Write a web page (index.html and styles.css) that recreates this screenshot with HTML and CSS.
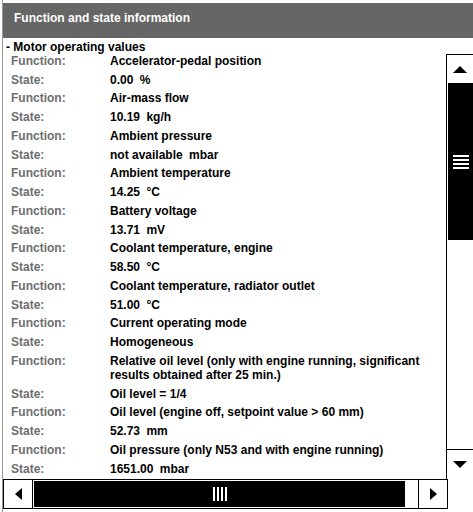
FILE: index.html
```html
<!DOCTYPE html>
<html lang="en">
<head>
<meta charset="UTF-8" />
<meta name="viewport" content="width=device-width, initial-scale=1" />
<title>Function and state information</title>
<link rel="stylesheet" href="styles.css">
</head>
<body>

<div class="frame">
  <div class="frame-title">Function and state information</div>

  <div class="frame-body">
    <div class="list">
      <div class="group-title">- Motor operating values</div>

      <div class="row"><span class="label">Function:</span><span class="value">Accelerator-pedal position</span></div>
      <div class="row"><span class="label">State:</span><span class="value">0.00 <span class="unit">%</span></span></div>
      <div class="row"><span class="label">Function:</span><span class="value">Air-mass flow</span></div>
      <div class="row"><span class="label">State:</span><span class="value">10.19 <span class="unit">kg/h</span></span></div>
      <div class="row"><span class="label">Function:</span><span class="value">Ambient pressure</span></div>
      <div class="row"><span class="label">State:</span><span class="value">not available <span class="unit">mbar</span></span></div>
      <div class="row"><span class="label">Function:</span><span class="value">Ambient temperature</span></div>
      <div class="row"><span class="label">State:</span><span class="value">14.25 <span class="unit">°C</span></span></div>
      <div class="row"><span class="label">Function:</span><span class="value">Battery voltage</span></div>
      <div class="row"><span class="label">State:</span><span class="value">13.71 <span class="unit">mV</span></span></div>
      <div class="row"><span class="label">Function:</span><span class="value">Coolant temperature, engine</span></div>
      <div class="row"><span class="label">State:</span><span class="value">58.50 <span class="unit">°C</span></span></div>
      <div class="row"><span class="label">Function:</span><span class="value">Coolant temperature, radiator outlet</span></div>
      <div class="row"><span class="label">State:</span><span class="value">51.00 <span class="unit">°C</span></span></div>
      <div class="row"><span class="label">Function:</span><span class="value">Current operating mode</span></div>
      <div class="row"><span class="label">State:</span><span class="value">Homogeneous</span></div>
      <div class="row"><span class="label">Function:</span><span class="value">Relative oil level (only with engine running, significant results obtained after 25 min.)</span></div>
      <div class="row"><span class="label">State:</span><span class="value">Oil level = 1/4</span></div>
      <div class="row"><span class="label">Function:</span><span class="value">Oil level (engine off, setpoint value &gt; 60 mm)</span></div>
      <div class="row"><span class="label">State:</span><span class="value">52.73 <span class="unit">mm</span></span></div>
      <div class="row"><span class="label">Function:</span><span class="value">Oil pressure (only N53 and with engine running)</span></div>
      <div class="row"><span class="label">State:</span><span class="value">1651.00 <span class="unit">mbar</span></span></div>
    </div>

    <div class="vbar">
      <div class="vbtn up">
        <svg width="14" height="7" viewBox="0 0 14 7"><polygon points="7,0 14,7 0,7" /></svg>
      </div>
      <div class="vthumb"><div class="grip-h"></div></div>
      <div class="track"></div>
      <div class="vbtn down">
        <svg width="14" height="7" viewBox="0 0 14 7"><polygon points="0,0 14,0 7,7" /></svg>
      </div>
    </div>
  </div>

  <div class="hbar">
    <div class="hbtn">
      <svg width="7" height="12" viewBox="0 0 7 12"><polygon points="7,0 7,12 0,6" /></svg>
    </div>
    <div class="hthumb"><div class="grip-v"></div></div>
    <div class="track"></div>
    <div class="hbtn">
      <svg width="7" height="12" viewBox="0 0 7 12"><polygon points="0,0 7,6 0,12" /></svg>
    </div>
  </div>
</div>

</body>
</html>
```

FILE: styles.css
```css
body {
  margin: 0;
  width: 473px;
  height: 512px;
  overflow: hidden;
  background: #fff;
  font-family: "Liberation Sans", Arial, sans-serif;
  font-size: 12px;
  font-weight: bold;
  color: #000;
}

.frame {
  margin-left: 2px;
  border-left: 1px solid #999;
  height: 512px;
  padding-top: 3px;
  box-sizing: border-box;
  display: flex;
  flex-direction: column;
}

.frame-title {
  height: 35px;
  box-sizing: border-box;
  padding: 8px 0 0 11px;
  line-height: 14px;
  background: #666;
  color: #fff;
}

.frame-body {
  display: flex;
  height: 441px;
}

/* list of function / state pairs */
.list {
  flex: 1;
  overflow: hidden;
  padding-top: 2px;
}

.group-title {
  line-height: 14px;
  padding-left: 3px;
  margin-bottom: -2.4px;
}

.row {
  display: grid;
  grid-template-columns: 99px 1fr;
  padding: 2.375px 8px 2.375px 8px;
  line-height: 14px;
}

.label {
  color: #6e6e6e;
}

.unit {
  margin-left: 3px;
}

/* scrollbars */
.vbar {
  width: 26px;
  margin-top: 16px;
  border-left: 1px solid #000;
  display: flex;
  flex-direction: column;
}

.vbtn {
  display: flex;
  align-items: center;
  justify-content: center;
  border-top: 1px solid #000;
  box-sizing: border-box;
}
.vbtn.up { height: 29px; }
.vbtn.down { height: 30px; }

.vthumb {
  height: 157px;
  margin-left: 1px;
  background: #000;
  display: flex;
  align-items: center;
  justify-content: center;
}

.track {
  flex: 1;
}

.grip-h {
  width: 16px;
  height: 14px;
  background: repeating-linear-gradient(#fff 0 2px, transparent 2px 4px);
}

.hbar {
  width: 445px;
  height: 30px;
  box-sizing: border-box;
  border-top: 1px solid #000;
  border-bottom: 1px solid #000;
  display: flex;
}

.hbtn {
  width: 30px;
  box-sizing: border-box;
  border-left: 1px solid #000;
  border-right: 1px solid #000;
  display: flex;
  align-items: center;
  justify-content: center;
}

.hthumb {
  width: 371px;
  margin: 1px 0 1px 1px;
  background: #000;
  display: flex;
  align-items: center;
  justify-content: center;
}

.grip-v {
  width: 14px;
  height: 14px;
  background: repeating-linear-gradient(90deg, #fff 0 2px, transparent 2px 4px);
}

svg polygon {
  fill: #000;
}
```
